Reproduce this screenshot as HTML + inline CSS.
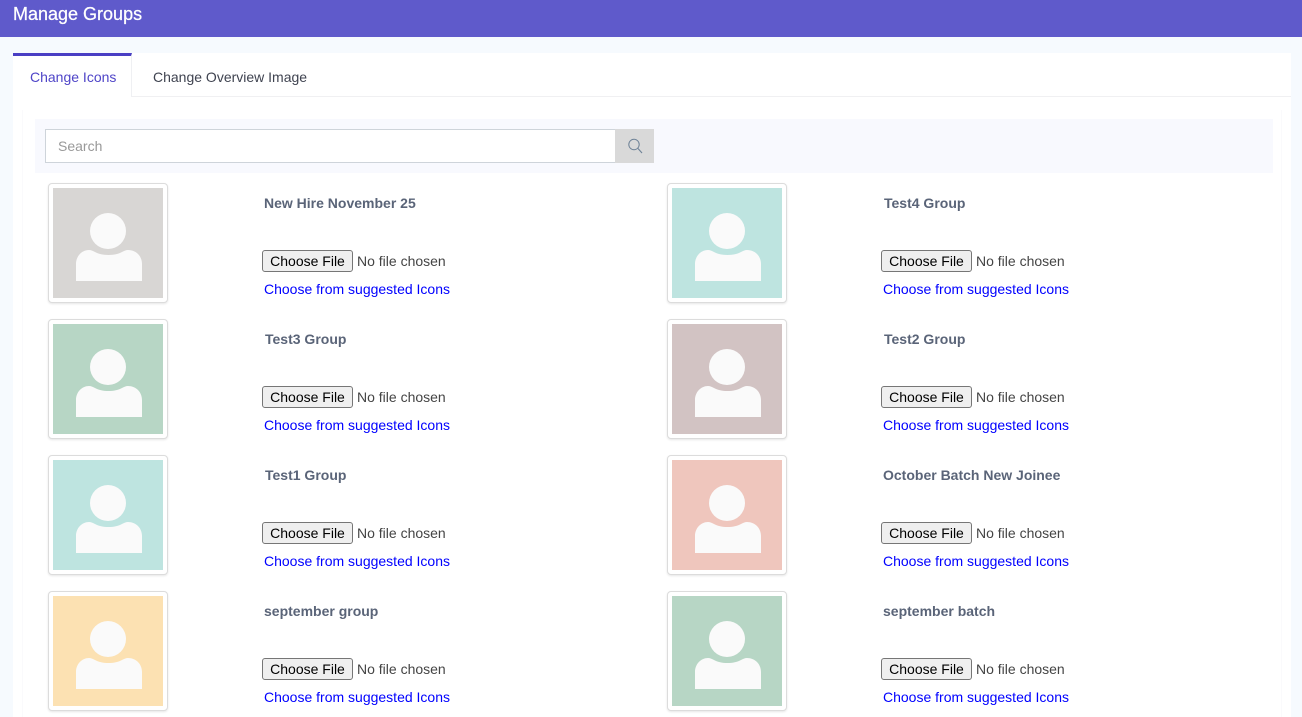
<!DOCTYPE html>
<html lang="en"><head><meta charset="utf-8"><title>Manage Groups</title>
<style>
html,body{margin:0;padding:0}
body{width:1302px;height:717px;overflow:hidden;position:relative;background:#f6fafe;font-family:"Liberation Sans",Arial,sans-serif;font-size:14px}
.a{position:absolute;white-space:nowrap}
.hd{left:0;top:0;width:1302px;height:37px;background:#5f5acb}
.hd span{position:absolute;left:13px;top:3px;font-size:18px;line-height:22px;color:#fff;-webkit-text-stroke:.25px #fff}
.card{left:13px;top:53px;width:1278px;height:664px;background:#fff}
.tabline{left:13px;top:96px;width:1278px;height:1px;background:#f0f0f2}
.tab{left:13px;top:53px;width:119px;height:44px;background:#fff;border-top:3px solid #4a3fc4;border-right:1px solid #eff0f3;box-sizing:border-box}
.t1{left:30px;top:69px;line-height:16px;color:#4f45c8}
.t2{left:153px;top:69px;line-height:16px;color:#3f4350}
.pl{left:22px;top:110px;width:1px;height:607px;background:#fafafc}
.pr{left:1281px;top:110px;width:1px;height:607px;background:#fafafc}
.band{left:35px;top:119px;width:1238px;height:54px;background:#f8f9fe}
.inp{left:45px;top:129px;width:571px;height:34px;box-sizing:border-box;background:#fff;border:1px solid #ced4da;border-right:0;color:#999;line-height:32px;padding-left:12px}
.sb{left:615px;top:129px;width:39px;height:34px;background:#d9d9d9}
.th{width:120px;height:120px;box-sizing:border-box;background:#fff;border:1px solid #dcdcdc;border-radius:4px;box-shadow:0 1px 2px rgba(0,0,0,.1)}
.th svg{position:absolute;left:4px;top:4px;display:block}
.n{font-weight:bold;color:#5a6478;line-height:16px}
.b{width:91px;height:22px;box-sizing:border-box;background:#efefef;border:1px solid #767676;border-radius:3px;color:#000;text-align:center;line-height:20px}
.f{color:#444;line-height:16px}
.l{color:#0000ff;line-height:16px;text-decoration:none}
</style></head>
<body>
<div class="a hd"><span>Manage Groups</span></div>
<div class="a card"></div>
<div class="a tabline"></div>
<div class="a tab"></div>
<div class="a t1">Change Icons</div>
<div class="a t2">Change Overview Image</div>
<div class="a pl"></div><div class="a pr"></div>
<div class="a band"></div>
<div class="a inp">Search</div>
<div class="a sb"><svg width="39" height="34" viewBox="0 0 39 34"><circle cx="19" cy="15.500" r="5.200" fill="none" stroke="#6d8196" stroke-width="1"/><path d="M23 19.500L27 24" stroke="#6d8196" stroke-width="1.100" fill="none"/></svg></div>

<!-- row 1 -->
<div class="a th" style="left:48px;top:183px"><svg width="110" height="110" viewBox="0 0 110 110"><rect width="110" height="110" fill="#d8d6d4"/><circle cx="55" cy="43" r="18" fill="#fafafa"/><path d="M23 93V76C23 68 29 62 36 62C38 62 40 63 42 64C46 66 50 67 55.500 67C61 67 65 66 69 64C71 63 73 62 75 62C83 62 89 68 89 76V93Z" fill="#fafafa"/></svg></div>
<div class="a n" style="left:264px;top:195px">New Hire November 25</div>
<div class="a b" style="left:262px;top:250px">Choose File</div>
<div class="a f" style="left:357px;top:253px">No file chosen</div>
<a class="a l" style="left:264px;top:281px">Choose from suggested Icons</a>

<div class="a th" style="left:667px;top:183px"><svg width="110" height="110" viewBox="0 0 110 110"><rect width="110" height="110" fill="#bee4e0"/><circle cx="55" cy="43" r="18" fill="#fafafa"/><path d="M23 93V76C23 68 29 62 36 62C38 62 40 63 42 64C46 66 50 67 55.500 67C61 67 65 66 69 64C71 63 73 62 75 62C83 62 89 68 89 76V93Z" fill="#fafafa"/></svg></div>
<div class="a n" style="left:884px;top:195px">Test4 Group</div>
<div class="a b" style="left:881px;top:250px">Choose File</div>
<div class="a f" style="left:976px;top:253px">No file chosen</div>
<a class="a l" style="left:883px;top:281px">Choose from suggested Icons</a>

<!-- row 2 -->
<div class="a th" style="left:48px;top:319px"><svg width="110" height="110" viewBox="0 0 110 110"><rect width="110" height="110" fill="#b7d6c5"/><circle cx="55" cy="43" r="18" fill="#fafafa"/><path d="M23 93V76C23 68 29 62 36 62C38 62 40 63 42 64C46 66 50 67 55.500 67C61 67 65 66 69 64C71 63 73 62 75 62C83 62 89 68 89 76V93Z" fill="#fafafa"/></svg></div>
<div class="a n" style="left:265px;top:331px">Test3 Group</div>
<div class="a b" style="left:262px;top:386px">Choose File</div>
<div class="a f" style="left:357px;top:389px">No file chosen</div>
<a class="a l" style="left:264px;top:417px">Choose from suggested Icons</a>

<div class="a th" style="left:667px;top:319px"><svg width="110" height="110" viewBox="0 0 110 110"><rect width="110" height="110" fill="#d2c3c3"/><circle cx="55" cy="43" r="18" fill="#fafafa"/><path d="M23 93V76C23 68 29 62 36 62C38 62 40 63 42 64C46 66 50 67 55.500 67C61 67 65 66 69 64C71 63 73 62 75 62C83 62 89 68 89 76V93Z" fill="#fafafa"/></svg></div>
<div class="a n" style="left:884px;top:331px">Test2 Group</div>
<div class="a b" style="left:881px;top:386px">Choose File</div>
<div class="a f" style="left:976px;top:389px">No file chosen</div>
<a class="a l" style="left:883px;top:417px">Choose from suggested Icons</a>

<!-- row 3 -->
<div class="a th" style="left:48px;top:455px"><svg width="110" height="110" viewBox="0 0 110 110"><rect width="110" height="110" fill="#bee4e0"/><circle cx="55" cy="43" r="18" fill="#fafafa"/><path d="M23 93V76C23 68 29 62 36 62C38 62 40 63 42 64C46 66 50 67 55.500 67C61 67 65 66 69 64C71 63 73 62 75 62C83 62 89 68 89 76V93Z" fill="#fafafa"/></svg></div>
<div class="a n" style="left:265px;top:467px">Test1 Group</div>
<div class="a b" style="left:262px;top:522px">Choose File</div>
<div class="a f" style="left:357px;top:525px">No file chosen</div>
<a class="a l" style="left:264px;top:553px">Choose from suggested Icons</a>

<div class="a th" style="left:667px;top:455px"><svg width="110" height="110" viewBox="0 0 110 110"><rect width="110" height="110" fill="#efc6bd"/><circle cx="55" cy="43" r="18" fill="#fafafa"/><path d="M23 93V76C23 68 29 62 36 62C38 62 40 63 42 64C46 66 50 67 55.500 67C61 67 65 66 69 64C71 63 73 62 75 62C83 62 89 68 89 76V93Z" fill="#fafafa"/></svg></div>
<div class="a n" style="left:883px;top:467px">October Batch New Joinee</div>
<div class="a b" style="left:881px;top:522px">Choose File</div>
<div class="a f" style="left:976px;top:525px">No file chosen</div>
<a class="a l" style="left:883px;top:553px">Choose from suggested Icons</a>

<!-- row 4 -->
<div class="a th" style="left:48px;top:591px"><svg width="110" height="110" viewBox="0 0 110 110"><rect width="110" height="110" fill="#fce1b2"/><circle cx="55" cy="43" r="18" fill="#fafafa"/><path d="M23 93V76C23 68 29 62 36 62C38 62 40 63 42 64C46 66 50 67 55.500 67C61 67 65 66 69 64C71 63 73 62 75 62C83 62 89 68 89 76V93Z" fill="#fafafa"/></svg></div>
<div class="a n" style="left:264px;top:603px">september group</div>
<div class="a b" style="left:262px;top:658px">Choose File</div>
<div class="a f" style="left:357px;top:661px">No file chosen</div>
<a class="a l" style="left:264px;top:689px">Choose from suggested Icons</a>

<div class="a th" style="left:667px;top:591px"><svg width="110" height="110" viewBox="0 0 110 110"><rect width="110" height="110" fill="#b7d6c5"/><circle cx="55" cy="43" r="18" fill="#fafafa"/><path d="M23 93V76C23 68 29 62 36 62C38 62 40 63 42 64C46 66 50 67 55.500 67C61 67 65 66 69 64C71 63 73 62 75 62C83 62 89 68 89 76V93Z" fill="#fafafa"/></svg></div>
<div class="a n" style="left:883px;top:603px">september batch</div>
<div class="a b" style="left:881px;top:658px">Choose File</div>
<div class="a f" style="left:976px;top:661px">No file chosen</div>
<a class="a l" style="left:883px;top:689px">Choose from suggested Icons</a>
</body></html>
